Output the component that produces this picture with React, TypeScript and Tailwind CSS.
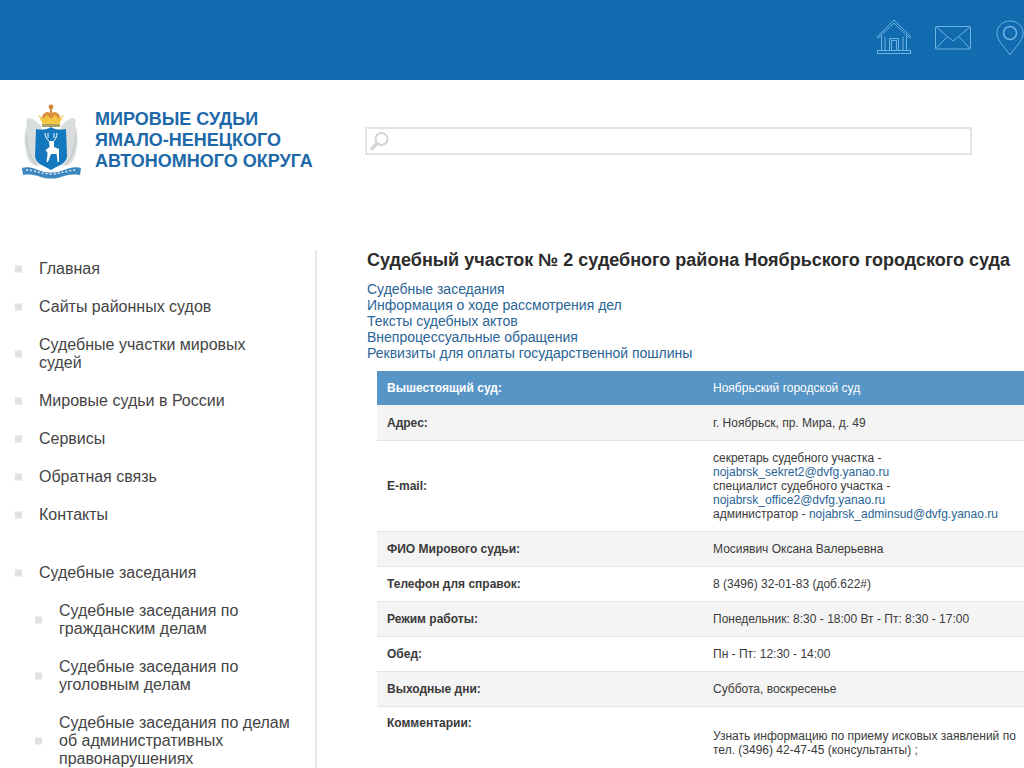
import React from 'react';

const mainMenu: string[][] = [
  ['Главная'],
  ['Сайты районных судов'],
  ['Судебные участки мировых', 'судей'],
  ['Мировые судьи в России'],
  ['Сервисы'],
  ['Обратная связь'],
  ['Контакты'],
];

const subMenu: string[][] = [
  ['Судебные заседания по', 'гражданским делам'],
  ['Судебные заседания по', 'уголовным делам'],
  ['Судебные заседания по делам', 'об административных', 'правонарушениях'],
];

const links = [
  'Судебные заседания',
  'Информация о ходе рассмотрения дел',
  'Тексты судебных актов',
  'Внепроцессуальные обращения',
  'Реквизиты для оплаты государственной пошлины',
];

const rows = [
  ['Адрес:', 'г. Ноябрьск, пр. Мира, д. 49'],
  ['E-mail:', null],
  ['ФИО Мирового судьи:', 'Мосиявич Оксана Валерьевна'],
  ['Телефон для справок:', '8 (3496) 32-01-83 (доб.622#)'],
  ['Режим работы:', 'Понедельник: 8:30 - 18:00 Вт - Пт: 8:30 - 17:00'],
  ['Обед:', 'Пн - Пт: 12:30 - 14:00'],
  ['Выходные дни:', 'Суббота, воскресенье'],
];

const Emblem = () => (
  <svg width="62" height="76" viewBox="0 0 62 76">
    {/* bears */}
    <path d="M8 14 C5 14 5 18 6 20 C3 28 3 40 5 48 C6 54 9 60 15 62 L24 60 L20 22 C16 18 12 14 8 14Z" fill="#d9dedc" />
    <path d="M52 14 C55 14 55 18 54 20 C57 28 57 40 55 48 C54 54 51 60 45 62 L36 60 L40 22 C44 18 48 14 52 14Z" fill="#d9dedc" />
    <path d="M5 30 C6 44 9 54 15 60" stroke="#b9c2c0" strokeWidth="1" fill="none" />
    <path d="M55 30 C54 44 51 54 45 60" stroke="#b9c2c0" strokeWidth="1" fill="none" />
    {/* crown */}
    <circle cx="30" cy="3" r="2.4" fill="#cf8a3a" />
    <rect x="29" y="4" width="2" height="6" fill="#cf8a3a" />
    <path d="M21 12 C24 7 28 7 30 10 C32 7 36 7 39 12 L38 18 L22 18Z" fill="#d9923a" />
    <path d="M17 10 L22 21 L38 21 L43 10 L38 15 L34 11 L30 15 L26 11 L22 15Z" fill="#f4c644" />
    <rect x="21" y="20" width="18" height="3" fill="#a9a06a" />
    {/* shield */}
    <path d="M15 25 C20 26 26 26 30 23 C34 26 40 26 45 25 L46 52 C46 59 37 62 30 66 C23 62 14 59 14 52Z" fill="#1478bf" />
    {/* deer */}
    <path d="M24 29 C24 33 26 36 29 38 M27 29 L27 34 M36 29 C36 33 34 36 32 38 M33 29 L33 34" stroke="#fff" strokeWidth="1" fill="none" />
    <path d="M28 37 L33 37 L33 43 L38 45 L38 58 L36.6 58 L35.6 50 L30 50 L27 58 L25.6 58 L26.6 49 L24.5 46 L28.5 43Z" fill="#fff" />
    {/* ribbon */}
    <path d="M1 64 C8 62 14 65 20 67 C26 69 34 69 40 67 C46 65 53 62 60 64 L59 71 C50 70 46 71 40 73 C34 75 26 75 20 73 C14 71 10 70 2 71Z" fill="#3d87c0" />
    <path d="M5 66 C14 66 20 70 30 70 C40 70 46 66 56 66" stroke="#dfe9f1" strokeWidth="1.5" strokeDasharray="2 2" fill="none" />
  </svg>
);

const Bullet = ({ className }: { className: string }) => (
  <span className={`absolute top-1/2 -translate-y-1/2 w-[7px] h-[7px] bg-[#e2e2e2] ${className}`} />
);

export default function App() {
  return (
    <div className="h-[768px] overflow-hidden bg-white font-['Liberation_Sans',Arial,sans-serif] text-[#333]">
      {/* top bar */}
      <div className="h-20 bg-[#126bae] flex items-center pl-[876px] gap-[23px] overflow-hidden text-[#6db3e4]">
        <svg className="shrink-0 -mt-[6px]" width="36" height="36" viewBox="0 0 36 36" fill="none" stroke="currentColor" strokeWidth="1">
          <path d="M1.5 17.5 L18 1 L34.5 17.5 L34 19 L30.5 16 L30.5 31 M5.5 16 L2 19 L1.5 17.5 M5.5 16 L5.5 31 M9 18 L9 31 M27 18 L27 31" />
          <path d="M5.5 16 L18 4 L30.5 16" />
          <path d="M13.5 31 L13.5 19.5 L22.5 19.5 L22.5 31 M15.5 31 L15.5 21.5 L20.5 21.5 L20.5 31" />
          <rect x="1.5" y="31.5" width="33" height="3" />
        </svg>
        <svg className="shrink-0 -mt-[5px]" width="36" height="24" viewBox="0 0 36 24" fill="none" stroke="currentColor" strokeWidth="1">
          <rect x="0.5" y="0.5" width="35" height="22.5" rx="1" />
          <path d="M1 1 L18 15 L35 1 M1 22.5 L12 11 M35 22.5 L24 11" />
        </svg>
        <svg className="shrink-0 -mt-[5px] ml-[2px]" width="36" height="36" viewBox="0 0 36 36" fill="none" stroke="currentColor" strokeWidth="1">
          <path d="M14 35 C8 26 1 21 1 13 C1 6 7 1 14 1 C21 1 27 6 27 13 C27 21 20 26 14 35Z" />
          <circle cx="14" cy="13" r="6.5" strokeWidth="1.5" />
        </svg>
      </div>

      {/* logo and search */}
      <div className="h-[170px] flex items-start">
        <div className="w-[365px] shrink-0 flex pl-[21px] pt-[24px] gap-[12px]">
          <Emblem />
          <div className="pt-[5px] text-[#1c68a8] text-[18px] leading-[21px] font-bold">
            <div>МИРОВЫЕ СУДЬИ</div>
            <div>ЯМАЛО-НЕНЕЦКОГО</div>
            <div>АВТОНОМНОГО ОКРУГА</div>
          </div>
        </div>
        <div className="mt-[47px] w-[607px] h-[28px] border-2 border-[#e4e4e4] flex items-center pl-[3px]">
          <svg width="20" height="20" viewBox="0 0 20 20" fill="none" stroke="#d4d4d4">
            <circle cx="11.5" cy="8" r="6" strokeWidth="2" />
            <path d="M7 12.5 L2 17.5" strokeWidth="3.5" strokeLinecap="round" />
          </svg>
        </div>
      </div>

      <div className="flex">
        {/* sidebar */}
        <div className="w-[317px] shrink-0 border-r-2 border-[#e6e6e6] h-[518px] text-[16px] leading-[18px] text-[#444]">
          <ul>
            {mainMenu.map((lines) => (
              <li key={lines[0]} className="relative pl-[39px] py-[10px]">
                <Bullet className="left-[15px]" />
                {lines.map((l) => <div key={l}>{l}</div>)}
              </li>
            ))}
          </ul>
          <div className="mt-[20px] relative pl-[39px] py-[10px]">
            <Bullet className="left-[15px]" />
            Судебные заседания
          </div>
          <ul>
            {subMenu.map((lines) => (
              <li key={lines[0] + lines[1]} className="relative pl-[59px] py-[10px]">
                <Bullet className="left-[35px]" />
                {lines.map((l) => <div key={l}>{l}</div>)}
              </li>
            ))}
          </ul>
        </div>

        {/* content */}
        <div className="pl-[50px] w-[707px] shrink-0">
          <h1 className="text-[18px] leading-5 font-bold text-[#2b2b2b] whitespace-nowrap">
            Судебный участок № 2 судебного района Ноябрьского городского суда
          </h1>
          <div className="mt-[11px] text-[14px] leading-4 text-[#2a6496]">
            {links.map((l) => <div key={l}>{l}</div>)}
          </div>
          <table className="mt-[10px] ml-[10px] w-[660px] table-fixed text-[12px] leading-[14px] border-collapse text-[#3a3a3a]">
            <colgroup>
              <col className="w-[326px]" />
              <col />
            </colgroup>
            <tbody>
              <tr className="bg-[#5795c6] text-white h-[34px]">
                <td className="pl-[10px] font-bold">Вышестоящий суд:</td>
                <td className="pl-[10px]">Ноябрьский городской суд</td>
              </tr>
              {rows.map(([label, value], i) => (
                <tr key={label} className={`border-b border-[#e4e4e4] ${i % 2 === 0 ? 'bg-[#f4f4f4]' : 'bg-white'} ${value ? 'h-[35px]' : ''}`}>
                  <td className={`pl-[10px] font-bold ${i === 0 ? 'pt-[2px]' : ''}`}>{label}</td>
                  <td className={`pl-[10px] ${i === 0 ? 'pt-[11px] pb-[9px]' : 'py-[10px]'}`}>
                    {value ?? (
                      <>
                        <div>секретарь судебного участка -</div>
                        <div className="text-[#2a6496]">nojabrsk_sekret2@dvfg.yanao.ru</div>
                        <div>специалист судебного участка -</div>
                        <div className="text-[#2a6496]">nojabrsk_office2@dvfg.yanao.ru</div>
                        <div>администратор - <span className="text-[#2a6496]">nojabrsk_adminsud@dvfg.yanao.ru</span></div>
                      </>
                    )}
                  </td>
                </tr>
              ))}
              <tr>
                <td className="pl-[10px] font-bold align-top pt-[9px]">Комментарии:</td>
                <td className="pl-[10px] pt-[22px]">
                  <div>Узнать информацию по приему исковых заявлений по</div>
                  <div>тел. (3496) 42-47-45 (консультанты) ;</div>
                </td>
              </tr>
            </tbody>
          </table>
        </div>
      </div>
    </div>
  );
}
